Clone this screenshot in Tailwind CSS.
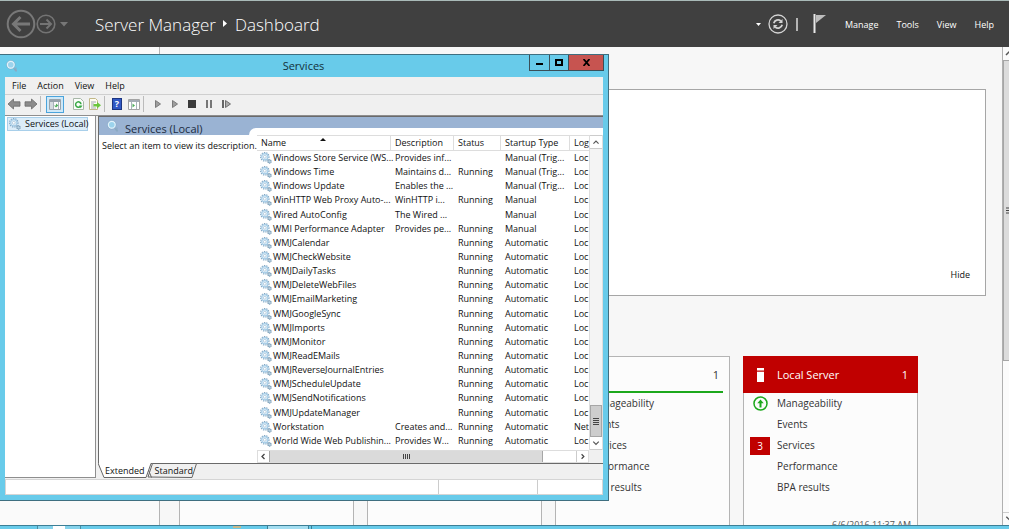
<!DOCTYPE html>
<html lang="en">
<head>
<meta charset="utf-8">
<title>Server Manager</title>
<script src="https://cdn.jsdelivr.net/npm/@tailwindcss/browser@4"></script>
</head>
<body class="relative flex h-screen flex-col overflow-hidden bg-[#f7f7f7] font-['Open_Sans','Noto_Sans',sans-serif] text-[9px] leading-[14px] text-[#111]">

<svg class="hidden">
  <symbol id="gears" viewBox="0 0 12 12">
    <circle cx="4.8" cy="4.8" r="4.2" fill="none" stroke="#86a9c4" stroke-width="1.2" stroke-dasharray="1.4 .9"/>
    <circle cx="4.8" cy="4.8" r="3.1" fill="#e3f1fa" stroke="#a4cbe6" stroke-width="1.2"/>
    <circle cx="4.8" cy="4.8" r="1.4" fill="#fff" stroke="#86aac6" stroke-width=".5"/>
    <circle cx="9.5" cy="9.4" r="1.7" fill="#b9d3e4" stroke="#6f93ae" stroke-width="1.100" stroke-dasharray="1.2 .4"/>
  </symbol>
  <symbol id="lens" viewBox="0 0 12 12">
    <circle cx="4.8" cy="4.8" r="3.5" fill="#9bd3ec" stroke="#e4f3fb" stroke-width="1.400"/>
    <circle cx="4.8" cy="4.8" r="4.400" fill="none" stroke="#7fa9c4" stroke-width=".5"/>
    <path d="M7.800 8.200 9.700 10.800M9.900 7.600v3.200H11" fill="none" stroke="#8aa9c2" stroke-width="1.300"/>
  </symbol>
  <symbol id="arrow" viewBox="0 0 14 12">
    <path d="M1 6 6.500 1v2.800H13v4.400H6.500V11z" fill="#8c8c8c" stroke="#6b6b6b" stroke-width=".8"/>
  </symbol>
</svg>

<header class="flex h-[47px] shrink-0 items-center border-t border-[#a9bab8] bg-[#404040] text-white">
  <button aria-label="Back" class="ml-[6px]"><svg class="size-[30px]" viewBox="0 0 30 30" fill="none" stroke="#787878"><circle cx="15" cy="15" r="13.3" stroke-width="2"/><path d="M24 15H8M14.500 8 7.500 15l7 7" stroke-width="3"/></svg></button>
  <button aria-label="Forward"><svg class="size-[20px]" viewBox="0 0 20 20" fill="none" stroke="#747474"><circle cx="10" cy="10" r="8.8" stroke-width="1.600"/><path d="M4 10h11M10.500 5.500 15 10l-4.500 4.500" stroke-width="2"/></svg></button>
  <button aria-label="History" class="ml-1"><svg class="h-[5px] w-2" viewBox="0 0 8 5"><path d="M0 0h8L4 4.500z" fill="#777"/></svg></button>
  <h1 class="ml-[27px] flex items-center pt-[2px] text-[17px] leading-6 font-light whitespace-nowrap">Server Manager
    <svg class="mr-2 ml-[7px] h-[7px] w-1 -translate-y-0.5" viewBox="0 0 4 7"><path d="M0 0 4 3.500 0 7z" fill="#fff"/></svg>Dashboard</h1>
  <div class="ml-auto flex items-center">
    <svg class="mr-[7px] h-[3px] w-[5px]" viewBox="0 0 5 3"><path d="M0 0h5L2.500 3z" fill="#fff"/></svg>
    <button aria-label="Refresh"><svg class="size-5" viewBox="0 0 20 20" fill="none" stroke="#d4d4d4"><circle cx="10" cy="10" r="9" stroke-width="1.300"/><path d="M5.800 9.200A4.300 4.300 0 0 1 12.800 7M14.200 10.800A4.300 4.300 0 0 1 7.200 13" stroke-width="1.700"/><path d="M14.500 5v4h-4zM5.500 15v-4h4z" fill="#d4d4d4" stroke="none"/></svg></button>
    <span class="ml-2 h-[13px] w-[2px] bg-[#b4b4b4]"></span>
    <button aria-label="Notifications" class="ml-[15px] self-start"><svg class="h-[19px] w-[13px]" viewBox="0 0 13 19"><path d="M.500 0h2v19h-2z" fill="#e8e8e8"/><path d="M3 1h10L3 9z" fill="#bdbdbd"/></svg></button>
    <nav class="ml-[19px] flex gap-[18px] pt-[2px] pr-[15px]">
      <button>Manage</button><button>Tools</button><button>View</button><button>Help</button>
    </nav>
  </div>
</header>

<main class="flex min-h-0 flex-1 overflow-hidden">
  <aside class="w-40 shrink-0 border-r border-[#b4b4b4] bg-[#fafafa]"></aside>
  <div class="min-w-0 flex-1 overflow-hidden pt-[42px] pl-[19px]">
    <section class="mr-4 flex h-[207px] items-end justify-end border border-[#a6a6a6] bg-white px-[15px] py-[13px]"><button>Hide</button></section>
    <div class="mt-[60px] flex gap-[13px] text-[10px] leading-[21px] text-[#333]">
      <article class="h-[190px] w-[175px] shrink-0 border border-[#b4b4b4] bg-[#fcfcfc]"></article>
      <article class="h-[190px] w-[175px] shrink-0 border border-[#b4b4b4] bg-[#fcfcfc]"></article>
      <article class="h-[190px] w-[175px] shrink-0 border border-[#b4b4b4] bg-[#fcfcfc]">
        <div class="mx-[6px] flex h-9 items-center justify-end border-b-2 border-[#1ca81c] pr-1 text-[11px]">1</div>
        <ul class="pl-[33px]"><li>Manageability</li><li>Events</li><li>Services</li><li>Performance</li><li>BPA results</li></ul>
      </article>
      <article class="h-[190px] w-[175px] shrink-0 border border-[#b4b4b4] bg-[#fcfcfc]">
        <div class="-mx-px -mt-px flex h-[37px] items-center bg-[#c00000] pr-[10px] pl-[14px] text-[11px] text-white">
          <svg class="h-[14px] w-[7px]" viewBox="0 0 7 14"><path d="M0 0h7v2.500H0zM0 3.700h7V14H0z" fill="#fff"/></svg>
          <span class="ml-[13px] flex-1">Local Server</span><span>1</span>
        </div>
        <ul class="grid grid-cols-[20px_1fr] items-center gap-x-[7px] pl-[6px]">
          <li class="contents"><svg class="mx-auto size-[15px]" viewBox="0 0 15 15" fill="none" stroke="#1ca81c"><circle cx="7.500" cy="7.500" r="6.500" stroke-width="1.500"/><path d="M7.500 11.500V6" stroke-width="2"/><path d="M4.300 7.300 7.500 3.500l3.200 3.800z" fill="#1ca81c" stroke="none"/></svg><span>Manageability</span></li>
          <li class="col-start-2">Events</li>
          <li class="contents"><span class="h-[18px] bg-[#c00000] text-center leading-[18px] text-white">3</span><span>Services</span></li>
          <li class="col-start-2">Performance</li>
          <li class="col-start-2">BPA results</li>
        </ul>
        <p class="mt-4 pr-[6px] text-right text-[9px] text-[#555]">6/6/2016 11:37 AM</p>
      </article>
    </div>
  </div>
  <div class="flex w-[7px] shrink-0 flex-col overflow-hidden border-l border-[#b0b0b0] bg-[#fbfbfb]">
    <svg class="h-[13px] w-[14px] shrink-0" viewBox="0 0 14 13"><path d="M3 8l4-4 4 4" fill="none" stroke="#555" stroke-width="1.500"/></svg>
    <div class="flex h-[301px] w-[14px] shrink-0 items-center border border-[#a6a6a6] bg-[#dcdcdc] pl-[2px]"><svg class="h-[7px] w-[7px]" viewBox="0 0 7 7"><path d="M0 1h7M0 3.500h7M0 6h7" stroke="#444"/></svg></div>
    <svg class="mt-auto h-[13px] w-[14px] shrink-0 border-t border-[#ccc]" viewBox="0 0 14 13"><path d="M3 4l4 4 4-4" fill="none" stroke="#555" stroke-width="1.500"/></svg>
  </div>
</main>

<footer class="flex h-1 shrink-0 border-t border-[#3c7f96] bg-[#68cbea]">
  <span class="ml-[37px] flex w-11 justify-center border-x border-[#4a8ca3] bg-[#86d3ec]"><i class="h-1 w-3 bg-white"></i></span>
  <span class="ml-[152px] h-[2px] w-2 bg-[#c9b98a]"></span>
  <span class="ml-[26px] flex w-[42px] justify-center border-x border-[#3c7f96] bg-[#a4def1]"></span>
  <span class="ml-[2px] w-px bg-[#3c7f96]"></span>
</footer>

<section aria-label="Services" class="absolute top-[54px] left-0 flex h-[447px] w-[609px] flex-col border-y border-r border-[#3f6f80] bg-[#68cbea] pr-[5px] pb-[5px] pl-[5px]">
  <div class="-mr-1 flex h-[22px] shrink-0 items-start">
    <svg class="mt-[5px] ml-px size-3"><use href="#lens"/></svg>
    <h2 class="mt-1 flex-1 pl-[60px] text-center text-[11px] text-[#12303a]">Services</h2>
    <div class="mr-[3px] flex h-4 divide-x divide-[#3a4f58] border border-t-0 border-[#3a4f58]">
      <button aria-label="Minimize" class="flex w-5 justify-center pt-[8px]"><span class="h-[2px] w-[7px] bg-black"></span></button>
      <button aria-label="Maximize" class="flex w-[19px] justify-center pt-[4px]"><span class="h-[7px] w-2 border-2 border-black"></span></button>
      <button aria-label="Close" class="flex w-[34px] items-center justify-center bg-[#c75450]"><svg class="size-[7px]" viewBox="0 0 7 7"><path d="M.500 0 6.500 7M6.500 0 .500 7" stroke="#000" stroke-width="1.800"/></svg></button>
    </div>
  </div>

  <div class="flex min-h-0 flex-1 flex-col bg-[#f0f0f0]">
    <nav class="flex h-[18px] shrink-0 items-center gap-[11px] border-b border-[#cfcfcf] pl-[7px]"><button>File</button><button>Action</button><button>View</button><button>Help</button></nav>

    <div class="flex h-5 shrink-0 items-center pb-[2px] pl-[2px]">
      <button aria-label="Back"><svg class="h-3 w-[14px]"><use href="#arrow"/></svg></button>
      <button aria-label="Forward" class="ml-[3px]"><svg class="h-3 w-[14px] -scale-x-100"><use href="#arrow"/></svg></button>
      <span class="ml-[2px] h-4 w-px bg-[#bbb]"></span>
      <button aria-label="Show console tree" class="ml-[5px] flex h-[17px] w-[18px] items-center justify-center border border-[#4ba4dc] bg-[#cfe8f7]"><svg class="h-[11px] w-3" viewBox="0 0 12 11"><path d="M.500.500h11v10H.500z" fill="#fbfbfb" stroke="#9aa3aa"/><path d="M1 1h10v2H1z" fill="#97a1aa"/><path d="M1 3h3v7H1z" fill="#d5dbe0"/><path d="M4.500 3v7M9.500 3v7" stroke="#a8b2ba"/><path d="M5 6.500h2V4.500l2.300 2L7 8.500z" fill="#4fae5a"/></svg></button>
      <button aria-label="Refresh" class="ml-[9px]"><svg class="h-3 w-[11px]" viewBox="0 0 11 12"><path d="M.500.500h7l3 3v8H.500z" fill="#fbfdfb" stroke="#a7b7a7"/><path d="M8 6.300A2.700 2.700 0 1 0 7.600 8" fill="none" stroke="#38a845" stroke-width="1.500"/><path d="M9.500 7.500H6.300l1.400 2.800z" fill="#38a845"/></svg></button>
      <button aria-label="Export list" class="ml-[5px]"><svg class="h-3 w-3" viewBox="0 0 12 12"><path d="M.500.500h6l2 2v9h-8z" fill="#fffdf0" stroke="#c2b888"/><path d="M2 4h5M2 6h3M2 8h3M2 10h5" stroke="#8c93a8" stroke-width=".8"/><path d="M4.500 6h3.500V4l4 3.200L8 10.500v-2H4.500z" fill="#6cc63d"/></svg></button>
      <span class="ml-[3px] h-4 w-px bg-[#bbb]"></span>
      <button aria-label="Help" class="ml-[7px] flex h-3 w-[10px] items-center justify-center border border-[#1c3580] bg-[#3158c4] text-[9px] leading-3 font-bold text-white">?</button>
      <button aria-label="Show action pane" class="ml-[6px]"><svg class="h-[11px] w-3" viewBox="0 0 12 11"><path d="M.500.500h11v10H.500z" fill="#fff" stroke="#a4a4a4"/><path d="M1 1h10v2H1z" fill="#a4acb4"/><path d="M3.500 3v7M8.500 3v7" stroke="#a9b4ba"/><path d="M4.500 4.500 7 6.500l-2.500 2z" fill="#4fae5a"/></svg></button>
      <span class="ml-[3px] h-4 w-px bg-[#bbb]"></span>
      <button aria-label="Start" class="ml-[11px]"><svg class="h-2 w-[6px]" viewBox="0 0 6 8"><path d="M.500.500 5.500 4 .500 7.500z" fill="#9e9e9e" stroke="#7a7a7a"/></svg></button>
      <button aria-label="Resume" class="ml-[11px]"><svg class="h-2 w-[6px]" viewBox="0 0 6 8"><path d="M.500.500 5.500 4 .500 7.500z" fill="#9e9e9e" stroke="#7a7a7a"/></svg></button>
      <button aria-label="Stop" class="ml-[10px] size-2 bg-[#3b3b3b]"></button>
      <button aria-label="Pause" class="ml-[10px] h-2 w-[6px] border-x-2 border-[#777]"></button>
      <button aria-label="Restart" class="ml-[10px]"><svg class="h-2 w-[9px]" viewBox="0 0 9 8"><path d="M0 0h2v8H0z" fill="#666"/><path d="M3.500.500 8.500 4l-5 3.500z" fill="#aaa" stroke="#6f6f6f"/></svg></button>
    </div>

    <div class="flex min-h-0 flex-1 border-t border-[#8e8e8e]">
      <aside class="w-[91px] shrink-0 border-r border-b border-[#8e8e8e] bg-white pt-px pl-[2px]">
        <a href="#" class="flex h-[14px] w-[81px] items-center gap-1 border border-[#a8cfea] bg-[#dcedf9] pl-px whitespace-nowrap"><svg class="size-3 shrink-0"><use href="#gears"/></svg>Services (Local)</a>
      </aside>
      <div class="ml-[2px] flex min-w-0 flex-1 flex-col">
        <div class="flex min-h-0 flex-1 flex-col border-b border-l border-[#6a6a6a] bg-white">
          <div class="relative flex h-[19px] shrink-0 items-center border-t border-[#6a6a6a] bg-[#9ab3d3] pl-2 text-[11px] text-[#1c2c42]">
            <svg class="mr-[6px] size-3"><use href="#lens"/></svg><span class="pt-1.5">Services (Local)</span>
            <span class="absolute right-0 bottom-0 left-[150px] h-[7px] rounded-tl-[7px] bg-white"></span>
          </div>
          <div class="flex min-h-0 flex-1">
            <p class="w-[157px] shrink-0 pt-1 pl-[3px] whitespace-nowrap">Select an item to view its description.</p>
            <div class="grid min-w-0 flex-1 grid-cols-[1fr_14px] grid-rows-[1fr_13px] pl-px">
              <table class="flex min-h-0 flex-col overflow-hidden border-t border-[#ddd] whitespace-nowrap">
                <thead class="block shrink-0"><tr class="grid h-[15px] grid-cols-[134px_63px_47px_69px_1fr] items-stretch border-b border-[#ddd] text-left">
                  <th class="relative border-r border-[#ddd] pl-1 font-normal">Name<svg class="absolute top-[2px] left-[63px] h-[3px] w-[6px]" viewBox="0 0 6 3"><path d="M0 3h6L3 0z" fill="#111"/></svg></th>
                  <th class="border-r border-[#ddd] pl-1 font-normal">Description</th>
                  <th class="border-r border-[#ddd] pl-1 font-normal">Status</th>
                  <th class="border-r border-[#ddd] pl-1 font-normal">Startup Type</th>
                  <th class="overflow-hidden pl-1 font-normal">Log</th>
                </tr></thead>
                <tbody id="rows" class="grid flex-1 auto-rows-fr pb-[2px]"></tbody>
              </table>
              <div class="flex flex-col border-x border-[#ddd] bg-[#f4f4f4]">
                <svg class="h-[14px] w-3 shrink-0 border-y border-[#ccc] bg-white" viewBox="0 0 12 14"><path d="M3 9l3-3 3 3" fill="none" stroke="#555" stroke-width="1.300"/></svg>
                <div class="mt-auto flex h-8 items-center justify-center border border-[#a6a6a6] bg-[#cdcdcd]"><svg class="h-[7px] w-[6px]" viewBox="0 0 6 7"><path d="M0 .500h6M0 2.500h6M0 4.500h6M0 6.500h6" stroke="#444"/></svg></div>
                <svg class="h-[13px] w-3 shrink-0 border-b border-[#ccc] bg-white" viewBox="0 0 12 13"><path d="M3 5l3 3 3-3" fill="none" stroke="#555" stroke-width="1.300"/></svg>
              </div>
              <div class="flex border border-[#ddd]">
                <svg class="h-[11px] w-[11px] shrink-0" viewBox="0 0 11 11"><path d="M6.500 3 4 5.500 6.500 8" fill="none" stroke="#444" stroke-width="1.300"/></svg>
                <div class="flex w-[274px] items-center justify-center border-x border-[#a6a6a6] bg-[#dadada]"><svg class="h-[5px] w-[7px]" viewBox="0 0 7 5"><path d="M.500 0v5M2.500 0v5M4.500 0v5M6.500 0v5" stroke="#444"/></svg></div>
                <svg class="ml-auto h-[11px] w-3 shrink-0 border-l border-[#ccc]" viewBox="0 0 12 11"><path d="M5 3l2.500 2.500L5 8" fill="none" stroke="#444" stroke-width="1.300"/></svg>
              </div>
              <div class="bg-[#f0f0f0]"></div>
            </div>
          </div>
        </div>
        <div class="relative flex h-[14px] shrink-0 items-center">
          <svg class="absolute -top-px left-0 h-[15px] w-[101px]" viewBox="0 0 101 15"><path d="M50 14 54.500.500H98.500L94 14.500z" fill="#f0f0f0" stroke="#666"/><path d="M0 0 6 14.500h42L53 0z" fill="#fff"/><path d="M0 0 6 14.500h42L53 .500M50.500 7l3 7.500" fill="none" stroke="#666"/></svg>
          <button class="relative ml-[7px]">Extended</button><button class="relative ml-[10px]">Standard</button>
        </div>
      </div>
    </div>
    <div class="mt-px flex h-4 shrink-0 border border-[#d5d5d5] bg-white"><span class="flex-1"></span><span class="w-[99px] border-l border-[#ccc]"></span><span class="w-[65px] border-l border-[#ccc]"></span></div>
  </div>
</section>

<script>
const services = [
  ["Windows Store Service (WS...", "Provides inf...", "", "Manual (Trig...", "Loc"],
  ["Windows Time", "Maintains d...", "Running", "Manual (Trig...", "Loc"],
  ["Windows Update", "Enables the ...", "", "Manual (Trig...", "Loc"],
  ["WinHTTP Web Proxy Auto-...", "WinHTTP i...", "Running", "Manual", "Loc"],
  ["Wired AutoConfig", "The Wired ...", "", "Manual", "Loc"],
  ["WMI Performance Adapter", "Provides pe...", "Running", "Manual", "Loc"],
  ...["Calendar", "CheckWebsite", "DailyTasks", "DeleteWebFiles", "EmailMarketing", "GoogleSync", "Imports", "Monitor", "ReadEMails", "ReverseJournalEntries", "ScheduleUpdate", "SendNotifications", "UpdateManager"]
    .map(n => ["WMJ" + n, "", "Running", "Automatic", "Loc"]),
  ["Workstation", "Creates and...", "Running", "Automatic", "Net"],
  ["World Wide Web Publishin...", "Provides W...", "Running", "Automatic", "Loc"]
];
document.getElementById("rows").innerHTML = services.map(([name, ...rest]) =>
  `<tr class="grid grid-cols-[134px_63px_47px_69px_1fr] items-center"><td class="flex items-center gap-px pl-[3px]"><svg class="size-3 shrink-0"><use href="#gears"/></svg>${name}</td>` +
  rest.map(c => `<td class="overflow-hidden pl-1">${c}</td>`).join("") + `</tr>`).join("");
</script>
</body>
</html>
